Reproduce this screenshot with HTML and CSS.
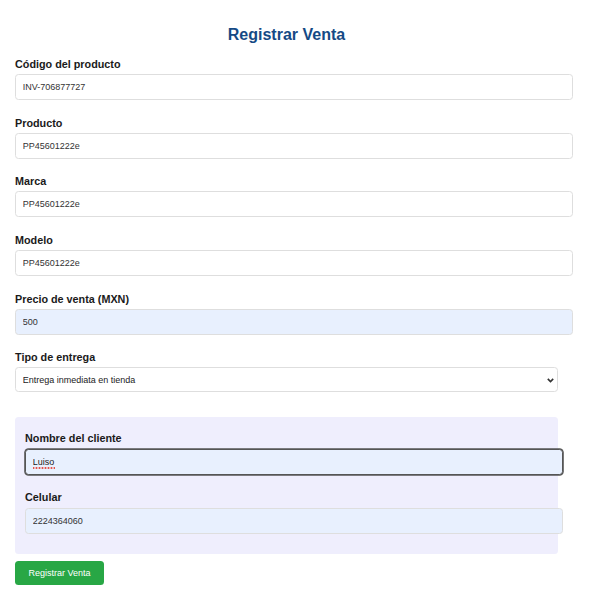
FILE: index.html
```html
<!DOCTYPE html>
<html lang="es">
<head>
<meta charset="utf-8">
<title>Registrar Venta</title>
<link rel="stylesheet" href="styles.css">
</head>
<body>
<main class="container">
  <h1 class="title">Registrar Venta</h1>
  <form class="form">
    <div class="field">
      <label class="label">Código del producto</label>
      <input class="input" type="text" value="INV-706877727">
    </div>
    <div class="field">
      <label class="label">Producto</label>
      <input class="input" type="text" value="PP45601222e">
    </div>
    <div class="field">
      <label class="label">Marca</label>
      <input class="input" type="text" value="PP45601222e">
    </div>
    <div class="field">
      <label class="label">Modelo</label>
      <input class="input" type="text" value="PP45601222e">
    </div>
    <div class="field">
      <label class="label">Precio de venta (MXN)</label>
      <input class="input input-filled" type="text" value="500">
    </div>
    <div class="field field-select">
      <label class="label">Tipo de entrega</label>
      <div class="select-wrap">
        <select class="select">
          <option>Entrega inmediata en tienda</option>
        </select>
        <svg class="chevron" width="7" height="5" viewBox="0 0 7 5"><path d="M0.8 0.9 L3.5 3.6 L6.2 0.9" fill="none" stroke="#333" stroke-width="1.6"/></svg>
      </div>
    </div>
    <section class="client-box">
      <div class="field field-box">
        <label class="label">Nombre del cliente</label>
        <div class="input-wrap">
          <input class="input input-filled input-focus" type="text" value="Luiso">
          <span class="spellmark"></span>
        </div>
      </div>
      <div class="field field-box field-last">
        <label class="label">Celular</label>
        <input class="input input-filled" type="text" value="2224364060">
      </div>
    </section>
    <button class="btn" type="button">Registrar Venta</button>
  </form>
</main>
</body>
</html>
```
FILE: styles.css
```css
html, body {
  margin: 0;
  padding: 0;
  background: #ffffff;
}
body {
  font-family: "Liberation Sans", Arial, sans-serif;
  color: #222;
}
.container {
  width: 543px;
  margin: 0 0 0 15px;
  padding-top: 26.3px;
}
.title {
  margin: 0 0 13.3px;
  font-size: 16px;
  line-height: 18.4px;
  font-weight: 700;
  text-align: center;
  color: #154a85;
}
.form {
  margin: 0;
}
.field {
  margin-bottom: 16.67px;
}
.label {
  display: block;
  font-size: 10.8px;
  line-height: 12.67px;
  font-weight: 700;
  color: #1a1a1a;
  margin-bottom: 3.33px;
}
.input {
  display: block;
  box-sizing: content-box;
  width: 100%;
  height: 24px;
  padding: 0 6.67px;
  margin: 0;
  border: 1px solid #dedede;
  border-radius: 3.5px;
  background: #ffffff;
  font-family: "Liberation Sans", Arial, sans-serif;
  font-size: 9px;
  color: #333;
  outline: none;
}
.input-filled {
  background: #e8f0fe;
}
.input-focus {
  border-color: #555;
  box-shadow: 0 0 0 0.8px #555;
  color: #222;
}
.input-wrap {
  position: relative;
}
.spellmark {
  position: absolute;
  left: 7.6px;
  top: 18px;
  width: 22px;
  height: 1.5px;
  background: repeating-linear-gradient(90deg, #e5534b 0 1.5px, rgba(229, 83, 75, 0.35) 1.5px 3px);
  pointer-events: none;
}
.field-select {
  margin-bottom: 24.4px;
}
.select-wrap {
  position: relative;
  width: 100%;
}
.select {
  display: block;
  box-sizing: border-box;
  width: 100%;
  height: 25px;
  margin: 0;
  padding: 0 6.67px;
  border: 1px solid #dedede;
  border-radius: 3.5px;
  background: #ffffff;
  -webkit-appearance: none;
  appearance: none;
  font-family: "Liberation Sans", Arial, sans-serif;
  font-size: 9px;
  color: #222;
}
.chevron {
  position: absolute;
  right: 4px;
  top: 10.5px;
  pointer-events: none;
}
.client-box {
  background: #efeefd;
  border-radius: 3.5px;
  padding: 15.4px 10px 20px;
}
.field-box .label {
  margin-bottom: 4.5px;
}
.field-box .input {
  height: 23.3px;
}
.field-last {
  margin-bottom: 0;
}
.btn {
  display: block;
  margin-top: 7.7px;
  width: 89px;
  height: 24px;
  padding: 0;
  border: none;
  border-radius: 3.5px;
  background: #28a745;
  color: #ffffff;
  font-family: "Liberation Sans", Arial, sans-serif;
  font-size: 9px;
  cursor: pointer;
}
```
